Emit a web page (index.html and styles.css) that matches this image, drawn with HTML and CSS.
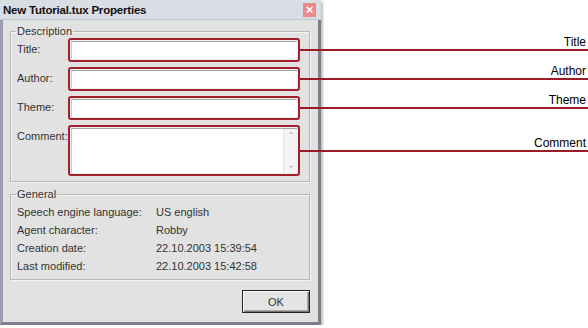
FILE: index.html
```html
<!DOCTYPE html>
<html lang="en">
<head>
    <meta charset="UTF-8">
    <title>New Tutorial.tux Properties</title>
    <link rel="stylesheet" href="styles.css">
</head>
<body>
    <div class="dialog">
        <div class="titlebar">
            <span class="title">New Tutorial.tux Properties</span>
            <span class="close">&#215;</span>
        </div>

        <div class="content">
            <fieldset class="group">
                <legend>Description</legend>
                <div class="form">
                    <label>Title:</label>
                    <div class="field"><div class="box"></div><span class="callout"><span>Title</span></span></div>

                    <label>Author:</label>
                    <div class="field"><div class="box"></div><span class="callout"><span>Author</span></span></div>

                    <label>Theme:</label>
                    <div class="field"><div class="box"></div><span class="callout"><span>Theme</span></span></div>

                    <label class="clip">Comment:</label>
                    <div class="field tall">
                        <div class="box">
                            <div class="scroll"><span>&#8963;</span><span>&#8964;</span></div>
                        </div>
                        <span class="callout"><span>Comment</span></span>
                    </div>
                </div>
            </fieldset>

            <fieldset class="group general">
                <legend>General</legend>
                <div class="info">
                    <span>Speech engine language:</span><span>US english</span>
                    <span>Agent character:</span><span>Robby</span>
                    <span>Creation date:</span><span>22.10.2003 15:39:54</span>
                    <span>Last modified:</span><span>22.10.2003 15:42:58</span>
                </div>
            </fieldset>

            <div class="buttons">
                <button>OK</button>
            </div>
        </div>
    </div>
</body>
</html>
```

FILE: styles.css
```css
body {
    margin: 0;
    background: #fff;
    font-family: "Liberation Sans", Arial, sans-serif;
    font-size: 11px;
    color: #222;
}
.dialog {
    background: #e2e2e2;
    border-left: 3px solid #9a9cb2;
    border-right: 3px solid #7e7e8e;
    border-bottom: 3px solid #7e7e8e;
    box-shadow: 2px 2px 2px rgba(0,0,0,0.25);
    box-sizing: border-box;
    width: 321px;
    height: 325px;
}
.titlebar {
    height: 20px;
    margin-left: -3px;
    margin-right: -3px;
    padding: 0 5px 0 3px;
    background: #d9dde4;
    display: flex;
    align-items: center;
    justify-content: space-between;
    border-bottom: 1px solid #c4c6d0;
    box-sizing: border-box;
}
.title {
    font-weight: bold;
    font-size: 11.5px;
    letter-spacing: -0.2px;
    color: #111;
}
.close {
    width: 13px;
    height: 14px;
    background: #e8898b;
    color: #fff;
    font-size: 13px;
    line-height: 14px;
    text-align: center;
    font-weight: bold;
}
.content {
    padding: 5px 8px 0 7px;
}
.group {
    margin: 0;
    padding: 0 9px 5px 6px;
    border: 1px solid #b8b8b8;
    box-shadow: inset 1px 1px 0 #f4f4f4, 1px 1px 0 #f4f4f4;
    min-inline-size: 0;
}
.group legend {
    padding: 0 1px;
    margin-left: -1px;
    line-height: 13px;
    color: #333;
}
.form {
    display: grid;
    grid-template-columns: 51px 232px;
    row-gap: 5px;
}
.form label {
    padding-top: 5px;
    color: #333;
    white-space: nowrap;
    overflow: hidden;
}
.field {
    position: relative;
    height: 24px;
    border: 2px solid #a2202b;
    border-radius: 3px;
    background: #f0f0f0;
    padding: 1px;
    box-sizing: border-box;
}
.field.tall {
    height: 51px;
}
.box {
    height: 100%;
    background: #fff;
    border-top: 1px solid #a8a8a8;
    border-left: 1px solid #c8c8c8;
    box-sizing: border-box;
    display: flex;
    justify-content: flex-end;
}
.scroll {
    width: 13px;
    background: #f4f4f4;
    border-left: 1px solid #e6e6e6;
    display: flex;
    flex-direction: column;
    justify-content: space-between;
    align-items: center;
    color: #b4b4b4;
    font-size: 10px;
    line-height: 12px;
    padding: 1px 0 2px;
}
.callout {
    position: absolute;
    left: 100%;
    top: 50%;
    width: 288px;
    margin-left: 2px;
    margin-top: -1px;
    border-top: 2px solid #9c1c26;
}
.callout span {
    position: absolute;
    right: 2px;
    bottom: 2px;
    font-size: 12px;
    color: #000;
    white-space: nowrap;
}
.general {
    margin-top: 6px;
    padding-bottom: 4px;
}
.info {
    display: grid;
    grid-template-columns: 139px auto;
    line-height: 18px;
    padding-top: 2px;
    color: #333;
}
.buttons {
    display: flex;
    justify-content: flex-end;
    margin-top: 10px;
}
button {
    width: 68px;
    height: 23px;
    font-family: inherit;
    font-size: 11px;
    color: #333;
    background: #e4e4e4;
    border: 1px solid #222;
    box-shadow: inset 1px 1px 0 #fff, inset -1px -1px 0 #777, inset -2px -2px 0 #aaa;
    padding: 0;
}
```
